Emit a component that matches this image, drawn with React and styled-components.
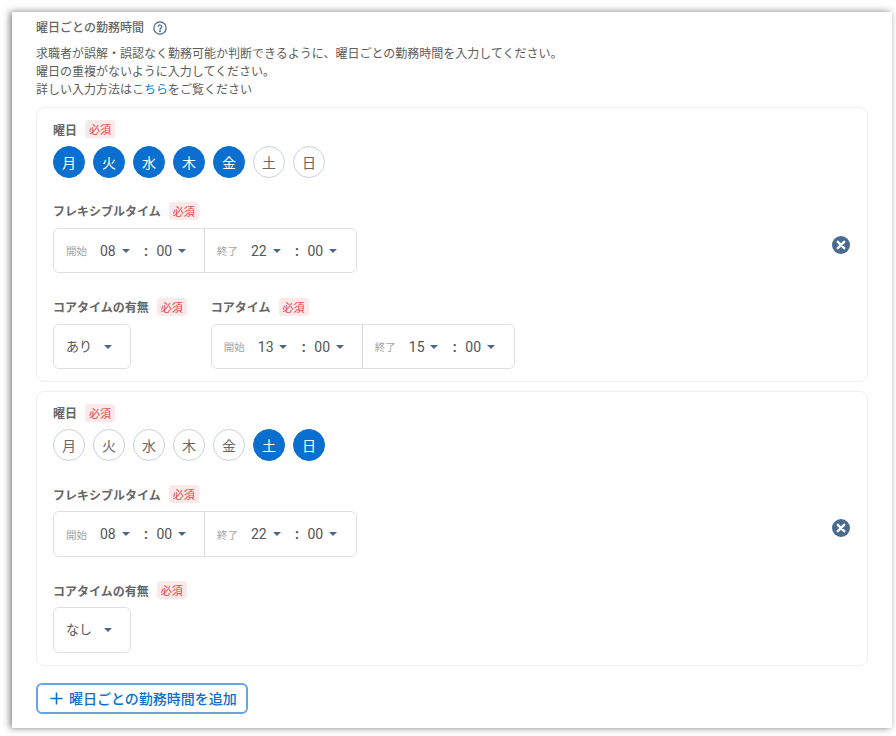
import React from "react";
import styled, { createGlobalStyle } from "styled-components";

const Global = createGlobalStyle`
  html, body { margin: 0; padding: 0; background: #fff; overflow: hidden; }
  body { font-family: Roboto, "Noto Sans CJK JP", sans-serif; color: #555; }
`;
const Page = styled.div`
  width: 896px; height: 736px; box-sizing: border-box; padding: 12px 4px 8px 12px;
`;
const Sheet = styled.section`
  box-sizing: border-box; width: 880px; height: 716px; background: #fff;
  padding: 7px 24px 0 24px;
  box-shadow: -2px 0 7px rgba(0,0,0,.5);
`;
const TitleRow = styled.div`
  display: flex; align-items: center; gap: 9px; height: 18px;
`;
const Title = styled.h2`
  margin: 0; font-size: 12px; font-weight: 500; color: #666; line-height: 18px;
`;
const Help = styled.svg`width: 14px; height: 14px; display: block;`;
const Desc = styled.p`
  margin: 9px 0 7.7px; font-size: 12px; line-height: 17.8px; color: #5c5c5c;
`;
const Link = styled.a`color: #1976d2; text-decoration: none;`;
const Card = styled.div`
  box-sizing: border-box; height: 275px; border: 1px solid #eee; border-radius: 8px;
  padding: 12px 17px 0 16px; margin-bottom: 8.6px;
`;
const Label = styled.div`
  display: flex; align-items: center; gap: 8px; height: 18px;
  font-size: 12px; font-weight: 700; color: #666; white-space: nowrap;
`;
const Badge = styled.span`
  display: inline-flex; align-items: center; justify-content: center;
  width: 30px; height: 18px; border-radius: 3px; background: #fbe9ea; color: #e0444f;
  font-size: 11px; font-weight: 400;
`;
const Days = styled.div`display: flex; gap: 8px; margin: 7.7px 0 24px;`;
const Day = styled.span`
  box-sizing: border-box; width: 32px; height: 32px; border-radius: 50%;
  display: flex; align-items: center; justify-content: center; font-size: 14px;
  background: ${p => (p.$on ? "#0b6fcf" : "#fff")};
  color: ${p => (p.$on ? "#fff" : "#666")};
  border: 1px solid ${p => (p.$on ? "#0b6fcf" : "#c9d2de")};
`;
const Row = styled.div`display: flex; align-items: center; justify-content: space-between;`;
const Field = styled.div`
  display: flex; flex-direction: column; gap: 8px;
`;
const Fields = styled.div`display: flex; gap: 24px; margin-top: 24.4px;`;
const TimeBox = styled.div`
  box-sizing: border-box; display: flex; width: 304px; height: 45.6px;
  border: 1px solid #e0e0e0; border-radius: 6px;
`;
const Seg = styled.div`
  display: flex; align-items: center; box-sizing: border-box; width: 150px;
  padding-left: 12px; font-size: 14px; color: #555;
  & + & { border-left: 1px solid #d8d8d8; width: 152px; padding-left: 12px; }
`;
const Cap = styled.span`font-size: 10.5px; color: #a3a3a3; width: 34px; flex: none;`;
const Num = styled.span`width: 15px; flex: none;`;
const Caret = styled.span`
  flex: none; margin-left: 6.5px; width: 0; height: 0;
  border-left: 4px solid transparent; border-right: 4px solid transparent;
  border-top: 4px solid #4a6788;
`;
const Colon = styled.span`
  flex: none; box-sizing: border-box; width: 27px; padding-left: 6px; text-align: center; font-weight: 700;
`;
const Select = styled.div`
  box-sizing: border-box; width: 78px; height: 45.6px; border: 1px solid #e0e0e0; border-radius: 6px;
  display: flex; align-items: center; padding-left: 12px; font-size: 13px; color: #555;
  ${Caret} { margin-left: 12px; }
`;
const SelectText = styled.span`margin-bottom: 3px;`;
const Close = styled.svg`width: 18px; height: 18px; display: block; margin-top: 14px;`;
const Add = styled.button`
  box-sizing: border-box; display: flex; align-items: center; gap: 6px; width: 212px; height: 31px;
  margin-top: 17px; padding: 0 0 0 12px; background: #fff; border: 2px solid #64a6e3; border-radius: 6px;
  color: #0b6fcf; font: 500 14px Roboto, "Noto Sans CJK JP", sans-serif; white-space: nowrap;
`;

const Req = () => <Badge>必須</Badge>;

const Time = ({ cap, h, m }) => (
  <Seg>
    <Cap>{cap}</Cap>
    <Num>{h}</Num>
    <Caret />
    <Colon>:</Colon>
    <Num>{m}</Num>
    <Caret />
  </Seg>
);

const Range = ({ a, b, c, d }) => (
  <TimeBox>
    <Time cap="開始" h={a} m={b} />
    <Time cap="終了" h={c} m={d} />
  </TimeBox>
);

const names = ["月", "火", "水", "木", "金", "土", "日"];

const Block = ({ on, core }) => (
  <Card>
    <Label>曜日<Req /></Label>
    <Days>
      {names.map(n => <Day key={n} $on={on.includes(n)}>{n}</Day>)}
    </Days>
    <Row>
      <Field>
        <Label>フレキシブルタイム<Req /></Label>
        <Range a="08" b="00" c="22" d="00" />
      </Field>
      <Close viewBox="0 0 18 18">
        <circle cx="9" cy="9" r="9" fill="#4a6b90" />
        <path d="M5.8 5.8l6.4 6.4M12.2 5.8l-6.4 6.4" stroke="#fff" strokeWidth="2.4" strokeLinecap="round" />
      </Close>
    </Row>
    <Fields>
      <Field>
        <Label>コアタイムの有無<Req /></Label>
        <Select><SelectText>{core ? "あり" : "なし"}</SelectText><Caret /></Select>
      </Field>
      {core && (
        <Field>
          <Label>コアタイム<Req /></Label>
          <Range a="13" b="00" c="15" d="00" />
        </Field>
      )}
    </Fields>
  </Card>
);

export default function App() {
  return (
    <Page>
      <Global />
      <Sheet>
        <TitleRow>
          <Title>曜日ごとの勤務時間</Title>
          <Help viewBox="0 0 24 24" fill="none" stroke="#3f6488" strokeWidth="2">
            <circle cx="12" cy="12" r="10.5" />
            <path d="M8.8 9.2a3.2 3.2 0 0 1 6.3.6c0 2.1-3.1 2.5-3.1 4.6" strokeLinecap="round" />
            <circle cx="12" cy="17.6" r=".7" fill="#3f6488" />
          </Help>
        </TitleRow>
        <Desc>
          求職者が誤解・誤認なく勤務可能か判断できるように、曜日ごとの勤務時間を入力してください。<br />
          曜日の重複がないように入力してください。<br />
          詳しい入力方法は<Link>こちら</Link>をご覧ください
        </Desc>
        <Block on={["月", "火", "水", "木", "金"]} core />
        <Block on={["土", "日"]} />
        <Add>
          <svg width="13" height="13" viewBox="0 0 13 13"><path d="M6.5 0.5v12M0.5 6.5h12" stroke="#0b6fcf" strokeWidth="1.6" /></svg>
          曜日ごとの勤務時間を追加
        </Add>
      </Sheet>
    </Page>
  );
}
